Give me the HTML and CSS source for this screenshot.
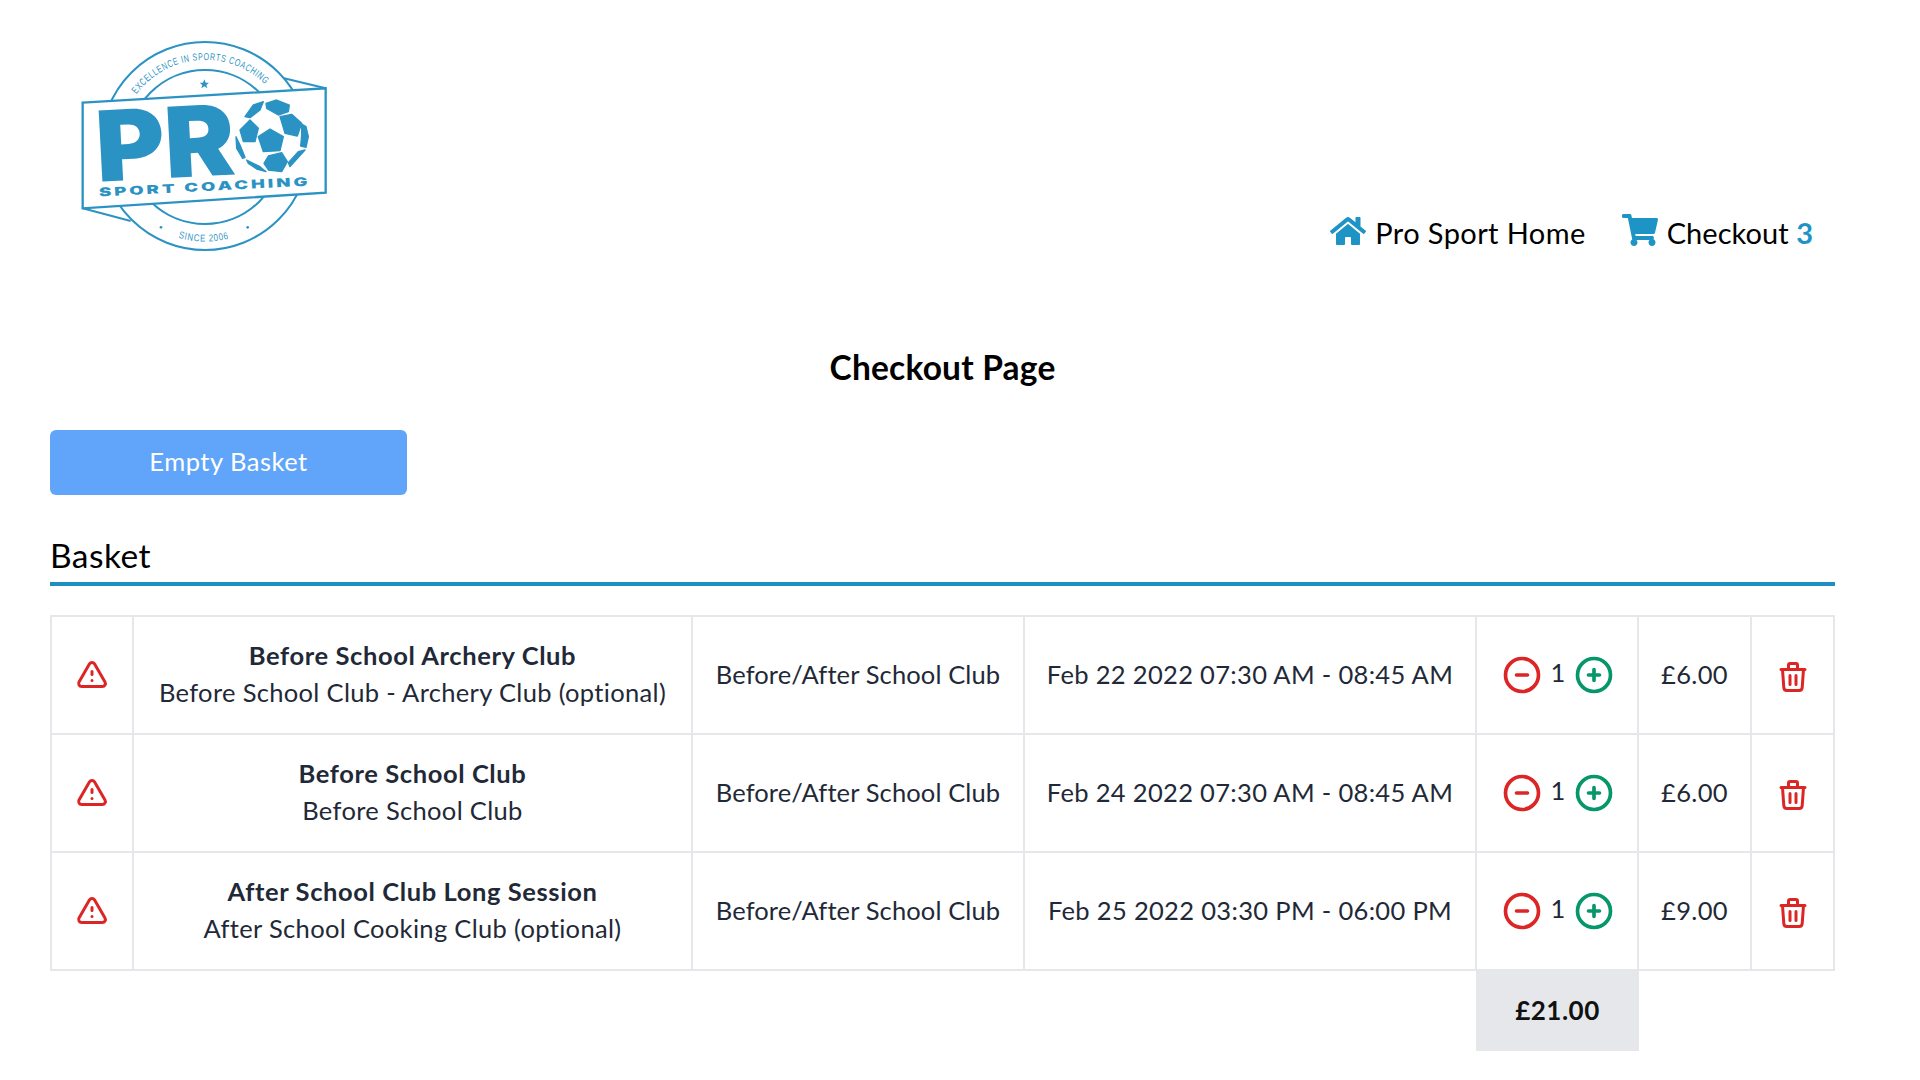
FILE: index.html
```html
<!DOCTYPE html>
<html lang="en">
<head>
<meta charset="utf-8">
<title>Checkout Page</title>
<link rel="stylesheet" href="styles.css">
</head>
<body>
<header class="site-header">
  <svg class="logo" viewBox="0 0 900 750" role="img" aria-label="Pro Sport Coaching">
    <defs>
      <path id="arc-top" d="M 229 223 A 258 258 0 0 1 633 212"/>
      <path id="arc-bottom" d="M 350 652 A 287 287 0 0 0 520 652"/>
    </defs>
    <g fill="none" stroke="#2b93c3" stroke-width="6">
      <circle cx="435" cy="378" r="312"/>
      <circle cx="435" cy="381" r="231"/>
      <path d="M672 175 797 205M68 565 212 603"/>
      <path fill="#fff" stroke-width="7" d="M68 248 797 205 797 518 68 565Z"/>
    </g>
    <g fill="#2b93c3">
      <text class="logo-small"><textPath href="#arc-top" textLength="440" lengthAdjust="spacingAndGlyphs">EXCELLENCE IN SPORTS COACHING</textPath></text>
      <text class="logo-small"><textPath href="#arc-bottom" startOffset="5" textLength="155" lengthAdjust="spacingAndGlyphs">SINCE 2006</textPath></text>
      <path d="M433 178l4 10 10 0-8 7 3 10-9-6-9 6 3-10-8-7 10 0z"/>
      <circle cx="303" cy="622" r="4"/>
      <circle cx="563" cy="622" r="4"/>
      <g transform="rotate(-3 300 380)">
        <text class="logo-pr" x="107" y="475" textLength="418" lengthAdjust="spacingAndGlyphs">PR</text>
        <text class="logo-sub" x="110" y="520" textLength="635" lengthAdjust="spacingAndGlyphs">SPORT COACHING</text>
      </g>
      <g class="logo-ball">
        <path d="M630 327 670 350 660 392 610 395 595 350Z"/>
        <path d="M555 290 580 255 610 245 600 270 570 293Z"/>
        <path d="M618 250 650 240 688 255 685 275 655 285 620 265Z"/>
        <path d="M660 290 695 283 725 310 712 348 675 340Z"/>
        <path d="M725 312 738 320 745 350 738 382 722 378 725 345Z"/>
        <path d="M625 408 665 398 682 425 665 455 625 450 612 430Z"/>
        <path d="M540 330 570 300 595 325 585 365 550 365Z"/>
        <path d="M528 350 540 375 555 412 548 415 530 385Z"/>
        <path d="M560 420 600 440 618 455 590 447 565 430Z"/>
        <path d="M735 390 690 440 685 428 715 395Z"/>
      </g>
    </g>
  </svg>
  <nav class="main-nav">
    <a class="nav-link" href="#">
      <svg class="nav-icon nav-home" viewBox="0 0 576 512"><path d="M280.37 148.26L96 300.11V464a16 16 0 0 0 16 16l112.06-.29a16 16 0 0 0 15.92-16V368a16 16 0 0 1 16-16h64a16 16 0 0 1 16 16v95.64a16 16 0 0 0 16 16.05L464 480a16 16 0 0 0 16-16V300L295.67 148.26a12.19 12.19 0 0 0-15.3 0zM571.6 251.47L488 182.56V44.05a12 12 0 0 0-12-12h-56a12 12 0 0 0-12 12v72.61L318.47 43a48 48 0 0 0-61 0L4.34 251.47a12 12 0 0 0-1.6 16.9l25.5 31A12 12 0 0 0 45.15 301l235.22-193.74a12.19 12.19 0 0 1 15.3 0L530.9 301a12 12 0 0 0 16.9-1.6l25.5-31a12 12 0 0 0-1.7-16.93z"/></svg>
      <span>Pro Sport Home</span>
    </a>
    <a class="nav-link nav-link-tight" href="#">
      <svg class="nav-icon nav-cart" viewBox="0 0 576 512"><path d="M528.12 301.319l47.273-208C578.806 78.301 567.391 64 551.99 64H159.208l-9.166-44.81C147.758 8.021 137.93 0 126.529 0H24C10.745 0 0 10.745 0 24v16c0 13.255 10.745 24 24 24h69.883l70.248 343.435C147.325 417.1 136 435.222 136 456c0 30.928 25.072 56 56 56s56-25.072 56-56c0-15.674-6.447-29.835-16.824-40h209.647C430.447 426.165 424 440.326 424 456c0 30.928 25.072 56 56 56s56-25.072 56-56c0-22.172-12.888-41.332-31.579-50.405l5.517-24.276c3.413-15.018-8.002-29.319-23.403-29.319H218.117l-6.545-32h293.145c11.206 0 20.92-7.754 23.403-18.681z"/></svg>
      <span>Checkout <b class="count">3</b></span>
    </a>
  </nav>
</header>
<main class="content">
  <h1 class="page-title">Checkout Page</h1>
  <button class="empty-btn" type="button">Empty Basket</button>
  <h2 class="section-title">Basket</h2>
  <table class="basket">
    <colgroup>
      <col class="c-warn"><col class="c-name"><col class="c-type"><col class="c-date"><col class="c-qty"><col class="c-price"><col class="c-del">
    </colgroup>
    <tbody>
      <tr>
        <td><svg class="ico ico-warn" viewBox="0 0 24 24"><path d="M12 9v2m0 4h.01m-6.938 4h13.856c1.54 0 2.502-1.667 1.732-3L13.732 4c-.77-1.333-2.694-1.333-3.464 0L3.34 16c-.77 1.333.192 3 1.732 3z"/></svg></td>
        <td><strong>Before School Archery Club</strong><br>Before School Club - Archery Club (optional)</td>
        <td class="type">Before/After School Club</td>
        <td>Feb 22 2022 07:30 AM - 08:45 AM</td>
        <td><div class="qty"><svg class="ico ico-minus" viewBox="0 0 24 24"><path d="M15 12H9m12 0a9 9 0 11-18 0 9 9 0 0118 0z"/></svg><span class="qty-n">1</span><svg class="ico ico-plus" viewBox="0 0 24 24"><path d="M12 9v3m0 0v3m0-3h3m-3 0H9m12 0a9 9 0 11-18 0 9 9 0 0118 0z"/></svg></div></td>
        <td>£6.00</td>
        <td><svg class="ico ico-trash" viewBox="0 0 24 24"><path d="M19 7l-.867 12.142A2 2 0 0116.138 21H7.862a2 2 0 01-1.995-1.858L5 7m5 4v6m4-6v6m1-10V4a1 1 0 00-1-1h-4a1 1 0 00-1 1v3M4 7h16"/></svg></td>
      </tr>
      <tr>
        <td><svg class="ico ico-warn" viewBox="0 0 24 24"><path d="M12 9v2m0 4h.01m-6.938 4h13.856c1.54 0 2.502-1.667 1.732-3L13.732 4c-.77-1.333-2.694-1.333-3.464 0L3.34 16c-.77 1.333.192 3 1.732 3z"/></svg></td>
        <td><strong>Before School Club</strong><br>Before School Club</td>
        <td class="type">Before/After School Club</td>
        <td>Feb 24 2022 07:30 AM - 08:45 AM</td>
        <td><div class="qty"><svg class="ico ico-minus" viewBox="0 0 24 24"><path d="M15 12H9m12 0a9 9 0 11-18 0 9 9 0 0118 0z"/></svg><span class="qty-n">1</span><svg class="ico ico-plus" viewBox="0 0 24 24"><path d="M12 9v3m0 0v3m0-3h3m-3 0H9m12 0a9 9 0 11-18 0 9 9 0 0118 0z"/></svg></div></td>
        <td>£6.00</td>
        <td><svg class="ico ico-trash" viewBox="0 0 24 24"><path d="M19 7l-.867 12.142A2 2 0 0116.138 21H7.862a2 2 0 01-1.995-1.858L5 7m5 4v6m4-6v6m1-10V4a1 1 0 00-1-1h-4a1 1 0 00-1 1v3M4 7h16"/></svg></td>
      </tr>
      <tr>
        <td><svg class="ico ico-warn" viewBox="0 0 24 24"><path d="M12 9v2m0 4h.01m-6.938 4h13.856c1.54 0 2.502-1.667 1.732-3L13.732 4c-.77-1.333-2.694-1.333-3.464 0L3.34 16c-.77 1.333.192 3 1.732 3z"/></svg></td>
        <td><strong>After School Club Long Session</strong><br>After School Cooking Club (optional)</td>
        <td class="type">Before/After School Club</td>
        <td>Feb 25 2022 03:30 PM - 06:00 PM</td>
        <td><div class="qty"><svg class="ico ico-minus" viewBox="0 0 24 24"><path d="M15 12H9m12 0a9 9 0 11-18 0 9 9 0 0118 0z"/></svg><span class="qty-n">1</span><svg class="ico ico-plus" viewBox="0 0 24 24"><path d="M12 9v3m0 0v3m0-3h3m-3 0H9m12 0a9 9 0 11-18 0 9 9 0 0118 0z"/></svg></div></td>
        <td>£9.00</td>
        <td><svg class="ico ico-trash" viewBox="0 0 24 24"><path d="M19 7l-.867 12.142A2 2 0 0116.138 21H7.862a2 2 0 01-1.995-1.858L5 7m5 4v6m4-6v6m1-10V4a1 1 0 00-1-1h-4a1 1 0 00-1 1v3M4 7h16"/></svg></td>
      </tr>
    </tbody>
  </table>
  <div class="total-row"><div class="total">£21.00</div></div>
</main>
</body>
</html>
```
FILE: styles.css
```css
* { box-sizing: border-box; }
html, body { margin: 0; padding: 0; background: #fff; }
body {
  font-family: "Lato", "Noto Sans", sans-serif;
  color: #000;
  height: 1080px;
  overflow: hidden;
}
.site-header {
  display: flex;
  justify-content: space-between;
  align-items: flex-end;
  height: 270px;
  padding: 20px 107px 0 60px;
}
.logo { width: 300px; height: 250px; display: block; }
.logo-small { font: 400 30px "Liberation Sans", sans-serif; letter-spacing: 3px; }
.logo-pr { font: 900 293px "Inter", sans-serif; }
.logo-sub { font: 900 36px "Inter", sans-serif; letter-spacing: 6px; }
.logo-ball path { stroke: #2b93c3; stroke-width: 4; stroke-linejoin: round; }
.main-nav {
  display: flex;
  gap: 36px;
  padding-bottom: 17px;
}
.nav-link {
  display: flex;
  align-items: center;
  gap: 9px;
  font-size: 29px;
  letter-spacing: 0.4px;
  line-height: 40px;
  color: #000;
  text-decoration: none;
}
.nav-link-tight { letter-spacing: 0.05px; }
.nav-icon { fill: #1e93c6; display: block; }
.nav-home { width: 36px; height: 32px; margin-top: -4px; }
.nav-cart { width: 36px; height: 32px; margin-top: -6px; }
.count { color: #1e93c6; font-weight: 700; }
.content { padding: 0 85px 0 50px; }
.page-title {
  margin: 77px 0 0;
  font-size: 33.5px;
  letter-spacing: 0.2px;
  line-height: 40px;
  font-weight: 700;
  text-align: center;
}
.empty-btn {
  display: block;
  width: 357px;
  height: 65px;
  margin-top: 43px;
  padding: 0 0 3px;
  border: 0;
  border-radius: 6px;
  background: #60a5fa;
  color: #fff;
  font: inherit;
  font-size: 25.5px;
  letter-spacing: 0.5px;
}
.section-title {
  margin: 40px 0 0;
  height: 51px;
  font-size: 33.5px;
  letter-spacing: 0.45px;
  line-height: 40px;
  font-weight: 400;
  border-bottom: 4px solid #1e8fc0;
}
.basket {
  width: 1783px;
  margin-top: 29px;
  border-collapse: collapse;
  table-layout: fixed;
  font-size: 25.5px;
  letter-spacing: 0.33px;
  line-height: 37px;
  color: #1f2937;
}
.c-warn { width: 82px; }
.c-name { width: 559px; }
.c-type { width: 332px; }
.c-date { width: 452px; }
.c-qty { width: 162px; }
.c-price { width: 113px; }
.c-del { width: 83px; }
.basket td {
  height: 118px;
  padding: 0 0 2px;
  text-align: center;
  vertical-align: middle;
  border: 2px solid #e5e7eb;
}
.basket td.type { letter-spacing: 0.12px; }
.basket strong { font-weight: 700; letter-spacing: 0.6px; }
.ico {
  display: inline-block;
  vertical-align: middle;
  fill: none;
  stroke-width: 2;
  stroke-linecap: round;
  stroke-linejoin: round;
}
.ico-warn { width: 36px; height: 36px; stroke: #dc2626; }
.ico-trash { width: 36px; height: 36px; stroke: #dc2626; margin-top: 3px; }
.ico-minus { width: 44px; height: 44px; stroke: #dc2626; }
.ico-plus { width: 44px; height: 44px; stroke: #059669; }
.qty { display: flex; align-items: center; justify-content: center; gap: 4px; padding: 2px 0 0 2px; }
.qty-n { margin: -5px 2.5px 0; }
.total-row { display: flex; padding-left: 1426px; }
.total {
  width: 163px;
  height: 80px;
  background: #e5e7eb;
  color: #111;
  font-size: 26px;
  letter-spacing: 0.5px;
  font-weight: 700;
  line-height: 78px;
  text-align: center;
}
```
